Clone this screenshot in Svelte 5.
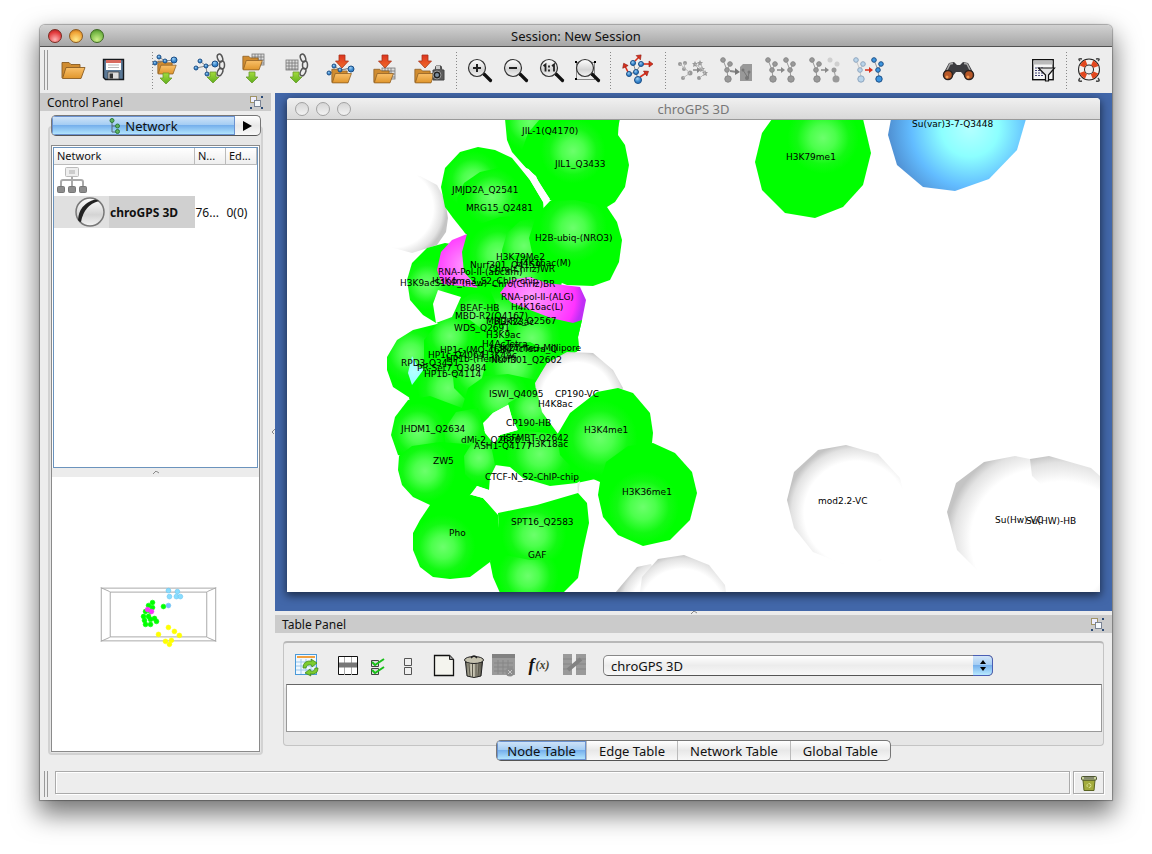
<script>
  const labels = [
    ['JIL-1(Q4170)', 522, 134], ['JIL1_Q3433', 555, 167], ['JMJD2A_Q2541', 452, 193],
    ['MRG15_Q2481', 466, 211], ['H2B-ubiq-(NRO3)', 535, 241], ['H3K79Me2', 496, 260],
    ['Nurf301_Q4159', 470, 268], ['H4K16ac(M)', 516, 266], ['Chro(Chriz)WR', 489, 272],
    ['RNA-Pol-II-(abcam)', 438, 275], ['H3K4me3_S2_ChIP-chip', 432, 284],
    ['H3K9acS10P_(new)', 400, 286], ['Chro(Chriz)BR', 492, 287], ['RNA-pol-II-(ALG)', 501, 300],
    ['H4K16ac(L)', 511, 310], ['BEAF-HB', 460, 311], ['MBD-R2(Q4167)', 455, 319],
    ['MBD-R2_Q2567', 486, 324], ['H3K23ac', 494, 325], ['WDS_Q2691', 454, 331],
    ['H3K9ac', 486, 338], ['H4AcTetra', 482, 347], ['H3K27me3-Millipore', 490, 351],
    ['HP1c-(MO-463)', 440, 353], ['H4AcTetra_Q', 500, 352], ['HP1c-Q4064', 428, 358],
    ['H3K4Ac', 482, 358], ['HP1b-(Henikoff)', 446, 362], ['Nurf301_Q2602', 491, 363],
    ['RPD3-Q3451', 401, 366], ['PR-Set7_Q3484', 417, 371], ['HP1b-Q4114', 424, 377],
    ['ISWI_Q4095', 489, 397], ['CP190-VC', 555, 397], ['H4K8ac', 538, 407],
    ['CP190-HB', 506, 426], ['JHDM1_Q2634', 401, 432], ['H3K4me1', 584, 433],
    ['dMi-2_Q2626', 461, 443], ['dSFMBT-Q2642', 500, 441], ['ASH1-Q4177', 474, 449],
    ['H3K18ac', 528, 447], ['ZW5', 433, 464], ['CTCF-N_S2-ChIP-chip', 485, 480],
    ['H3K36me1', 622, 495], ['SPT16_Q2583', 511, 525], ['Pho', 449, 536], ['GAF', 528, 558],
    ['H3K79me1', 786, 160], ['Su(var)3-7-Q3448', 912, 127], ['mod2.2-VC', 818, 504],
    ['Su(Hw)-VC', 995, 523], ['Su(HW)-HB', 1026, 524],
  ];

  // Each sphere: kind, highlight x, highlight y, gradient radius, outline points.
  const spheres = [
    ['white', 394, 208, 53, '376,237 390,247 412,253 437,245 446,232 448,218 445,200 437,185 420,176 400,173 384,175 372,190 366,212'],
    ['green', 530, 122, 34, '505,119 507,140 512,152 526,168 560,180 615,140 620,119'],
    ['green', 573, 151, 38, '540,119 528,133 522,150 525,165 536,177 550,200 575,214 607,207 615,202 625,187 629,165 625,145 618,135 619,119'],
    ['green', 473, 180, 34, '478,147 460,152 445,168 441,187 445,207 453,218 465,233 500,260 545,240 543,202 530,180 512,158 495,150'],
    ['green', 492, 197, 34, '503,167 480,172 464,183 457,198 458,216 465,233 500,260 545,240 543,202 530,182'],
    ['green', 427, 284, 30, '445,243 427,248 412,263 407,280 410,300 423,315 436,323 470,330 500,300 490,250'],
    ['magenta', 466, 266, 40, '467,234 452,240 441,252 437,270 442,284 480,288 500,270 490,240'],
    ['green', 498, 254, 36, '467,234 480,224 500,217 530,215 560,240 560,290 520,300 480,290 464,272 462,252'],
    ['green', 524, 246, 34, '545,216 520,221 507,233 502,250 504,272 520,292 560,290 570,250'],
    ['green', 520, 278, 30, '520,254 500,260 488,275 484,290 500,300 545,300 560,285 545,262'],
    ['green', 500, 322, 40, '461,297 480,286 510,285 545,300 582,320 578,337 579,350 560,362 500,380 450,360 452,317'],
    ['green', 474, 316, 28, '490,290 470,294 458,302 452,317 450,335 460,350 490,350 505,325'],
    ['green', 532, 338, 34, '552,311 528,311 510,322 503,342 512,370 545,372 579,350 578,337 582,320'],
    ['green', 411, 354, 34, '450,320 437,324 413,330 397,340 387,357 387,370 393,387 410,398 440,410 470,380 470,330'],
    ['green', 450, 336, 30, '452,315 437,324 424,340 424,362 440,380 480,372 490,335 470,320'],
    ['green', 448, 388, 36, '470,352 440,354 424,368 414,386 409,398 420,430 450,448 485,430 496,395 490,362'],
    ['blue', 414, 372, 40, '412,356 418,367 424,369 412,385 408,373'],
    ['green', 478, 372, 34, '490,346 465,350 452,366 454,388 470,404 500,400 520,380 512,352'],
    ['green', 514, 366, 34, '530,342 505,345 487,358 482,378 494,396 520,402 536,384 546,364 545,350'],
    ['green', 500, 397, 34, '508,374 485,376 468,388 462,408 470,430 485,430 484,422 493,413 508,405 538,395 536,380'],
    ['green', 418, 432, 34, '408,400 395,417 391,435 398,455 430,466 465,456 475,432 462,408 430,396'],
    ['green', 462, 428, 30, '478,408 456,412 444,430 446,450 462,464 490,450 492,440 484,430'],
    ['green', 425, 471, 36, '440,442 412,446 399,456 398,470 402,485 413,497 430,505 460,508 477,486 490,470 485,452 465,444'],
    ['green', 479, 458, 30, '490,432 474,440 464,456 465,474 477,486 489,490 490,477 496,465 500,450'],
    ['white', 577, 398, 48, '537,400 535,383 547,363 567,352 593,353 613,370 623,388 600,430 557,435 541,415'],
    ['green', 532, 408, 30, '508,403 512,418 518,432 557,440 558,434 542,412 536,388'],
    ['green', 540, 454, 40, '500,435 492,450 495,465 510,467 523,478 550,486 577,483 600,478 600,440 557,434 518,430'],
    ['white', 560, 480, 22, '577,483 580,481 578,493'],
    ['green', 600, 438, 44, '618,388 597,392 570,413 557,435 560,455 575,471 600,482 630,480 652,443 653,433 650,413 633,393'],
    ['green', 643, 507, 42, '653,443 628,446 606,462 600,482 598,495 603,517 618,535 643,546 670,540 690,520 697,493 692,472 675,453'],
    ['green', 443, 547, 38, '430,505 420,520 413,533 413,550 420,567 433,577 450,579 470,577 490,562 500,540 498,515 483,498 472,495 450,496'],
    ['green', 528, 576, 36, '490,562 493,577 500,593 563,593 578,578 583,550 540,530 494,540'],
    ['green', 534, 535, 38, '498,513 537,505 578,493 587,503 589,523 583,550 562,558 530,560 505,555 491,548 499,530'],
    ['green', 573, 228, 40, '575,200 550,201 536,216 529,238 534,262 547,277 567,285 593,286 610,280 619,262 622,240 617,222 607,207'],
    ['magenta', 531, 297, 52, '530,277 510,280 500,293 512,303 530,310 551,318 573,323 582,320 586,300 580,287 547,283'],
    ['green', 823, 138, 42, '772,119 762,133 755,162 762,190 785,213 815,218 843,207 863,185 871,153 863,119'],
    ['blue', 970, 128, 82, '891,119 888,135 897,165 923,187 955,191 989,179 1017,150 1026,119'],
    ['white', 856, 513, 70, '846,445 818,450 794,472 787,500 794,528 813,552 843,564 880,561 905,530 907,507 900,478 878,454'],
    ['white', 1062, 560, 106, '1049,456 1030,459 1018,480 1040,592 1101,592 1101,477 1091,468'],
    ['white', 1042, 540, 96, '1015,456 984,462 956,483 947,512 957,550 984,577 1019,593 1101,593 1101,540 1032,476 1030,459'],
    ['white', 672, 610, 56, '615,593 637,567 651,564 665,593'],
    ['white', 682, 612, 58, '640,593 642,577 658,559 684,555 709,565 725,585 726,593'],
  ];

  const gaps = [
    '438,290 461,297 452,317 436,323 433,304',
    '508,405 493,413 483,423 485,433 494,444 500,435 518,430 512,418',
    '472,495 477,486 489,490 498,513 483,498',
    '510,153 526,168 536,176 538,181 550,199 543,202 530,180',
  ];

  const mini = [
    ['#0f0', 153, 602], ['#0f0', 149, 605], ['#0f0', 153, 607], ['#0f0', 146, 611], ['#0f0', 151, 611],
    ['#0f0', 144, 616], ['#0f0', 149, 616], ['#0f0', 145, 620], ['#0f0', 151, 619], ['#0f0', 155, 618],
    ['#0f0', 157, 621], ['#0f0', 146, 624], ['#0f0', 151, 624], ['#0f0', 164, 606],
    ['#f3f', 148, 609], ['#f3f', 152, 611],
    ['#8df', 169, 590], ['#8df', 170, 596], ['#8df', 178, 591], ['#8df', 177, 596], ['#8df', 181, 596], ['#7bf', 169, 605],
    ['#ff0', 169, 627], ['#ff0', 175, 631], ['#ff0', 159, 634], ['#ff0', 180, 635], ['#ff0', 172, 640], ['#ff0', 166, 641], ['#ff0', 170, 644],
  ];

  const tabs = ['Node Table', 'Edge Table', 'Network Table', 'Global Table'];
  let active = $state('Node Table');
</script>

{#snippet folder(x, y, s = 1)}
  <g transform="translate({x} {y}) scale({s})">
    <path d="M1 17V1.500h7l2 2h9v4" fill="#d08c30" stroke="#8a5c22" stroke-width=".9" />
    <path d="M1.500 17.500 5 6.500h19L20 17.500z" fill="url(#gold)" stroke="#8a5c22" stroke-width=".9" stroke-linejoin="round" />
  </g>
{/snippet}
{#snippet ball(x, y, r = 2)}
  <circle cx={x} cy={y} {r} fill="url(#ball)" stroke="#1d4f86" />
{/snippet}
{#snippet down(x, y)}
  <path d="M{x - 3} {y}h6v5h3l-6 6-6-6h3z" fill="url(#leaf)" stroke="#6a9a2c" stroke-width=".8" />
{/snippet}
{#snippet red(x, y)}
  <path d="M{x - 3} {y}h6v6h3.500l-6.500 7-6.500-7h3.500z" fill="url(#flame)" stroke="#a8321a" stroke-width=".8" />
{/snippet}
{#snippet grid(x, y, w, h)}
  <g stroke="#777" stroke-width=".8">
    <rect {x} {y} width={w} height={h} fill="#ddd" />
    <path d="M{x + 3} {y}v{h}M{x + 6} {y}v{h}M{x + 9} {y}v{h}M{x} {y + 3}h{w}M{x} {y + 6}h{w}M{x} {y + 9}h{w}" />
  </g>
{/snippet}
{#snippet chain(x)}
  <g fill="none" stroke="#555" stroke-width="1.500">
    <ellipse cx={x} cy="8" rx="2.500" ry="4" transform="rotate(-20 {x} 8)" />
    <ellipse cx={x + 2} cy="15" rx="2.500" ry="4" />
    <ellipse cx={x} cy="22" rx="2.500" ry="4" transform="rotate(25 {x} 22)" />
  </g>
{/snippet}
{#snippet lens()}
  <path d="m25 24 6.500 6.500" stroke="#111" stroke-width="3.200" stroke-linecap="round" />
  <circle cx="18" cy="18" r="8.500" fill="url(#glass)" stroke="#333" stroke-width="1.200" />
{/snippet}
{#snippet tree(x, c, o = 1)}
  <g opacity={o} fill={c} stroke={c === '#999' ? '#888' : '#1d4f86'}>
    <path d="m{x} 10 4 10 1 9M{x + 4} 20l3-6" fill="none" stroke="#999" />
    <circle cx={x} cy="10" r="2.300" /><circle cx={x + 7} cy="14" r="2.300" />
    <circle cx={x + 4} cy="20" r="2.300" /><circle cx={x + 5} cy="29" r="3.200" />
  </g>
{/snippet}
{#snippet right(x, c)}
  <path d="M{x} 20h5" stroke={c} stroke-width="1.500" /><path d="m{x + 4} 17 4 3-4 3z" fill={c} />
{/snippet}
{#snippet redArrow(x1, y1, x2, y2)}
  <path d="M{x1} {y1}L{x2} {y2}" stroke="#d9301c" stroke-width="1.600" />
  <path d="M{x2 + 3} {y2}l-4-3v6z" fill="#d9301c" stroke="#8f1a10" stroke-width=".6" transform="rotate({(Math.atan2(y2 - y1, x2 - x1) * 180) / Math.PI} {x2} {y2})" />
{/snippet}
{#snippet floatIcon()}
  <button class="float" aria-label="Float panel">
    <svg width="14" height="14" viewBox="0 0 14 14">
      <rect x=".5" y=".5" width="6" height="6" fill="#eef" stroke="#a09468" />
      <rect x="4.500" y="4.500" width="6" height="6" fill="#f4f8fc" stroke="#7b8494" />
      <path d="M11 0h2v2h-2zM11 11h2v2h-2zM0 11h2v2H0z" fill="#2b4a75" />
    </svg>
  </button>
{/snippet}

<svg class="defs" width="0" height="0" aria-hidden="true">
  <defs>
    <linearGradient id="gold" x2="0" y2="1"><stop stop-color="#f9c06a" /><stop offset="1" stop-color="#e0962c" /></linearGradient>
    <linearGradient id="leaf" x2="0" y2="1"><stop stop-color="#a4dc3c" /><stop offset="1" stop-color="#5fae1e" /></linearGradient>
    <linearGradient id="flame" x2="0" y2="1"><stop stop-color="#dd3420" /><stop offset="1" stop-color="#f06a28" /></linearGradient>
    <radialGradient id="ball" cx=".4" cy=".3"><stop stop-color="#9cd0f6" /><stop offset="1" stop-color="#2f7fc8" /></radialGradient>
    <linearGradient id="glass" x2="0" y2="1"><stop stop-color="#fff" /><stop offset=".6" stop-color="#d4d4d4" /><stop offset="1" stop-color="#f4f4f4" /></linearGradient>
    <linearGradient id="silver" x2="1"><stop stop-color="#6a685a" /><stop offset=".4" stop-color="#d8d5c2" /><stop offset="1" stop-color="#4c4a40" /></linearGradient>
  </defs>
</svg>

<div class="page">
  <div class="window">
    <header class="title">
      <span class="lights"><button class="r" aria-label="Close"></button><button class="y" aria-label="Minimize"></button><button class="g" aria-label="Zoom"></button></span>
      <span class="caption">Session: New Session</span>
    </header>

    <div class="toolbar">
      <span class="grip"></span>
      <div class="group first">
        <button aria-label="Open session"><svg viewBox="0 0 40 40">{@render folder(8, 11)}</svg></button>
        <button aria-label="Save session"><svg viewBox="0 0 40 40">
          <path d="M9.500 9.500h20v20h-18l-2-2z" fill="#5a7896" stroke="#15191d" stroke-width="1.400" />
          <path d="M12 10h15v10H12z" fill="#fff" /><path d="M12 10h15v3H12z" fill="#d86a5e" /><path d="M14 15h11M14 17.500h11" stroke="#bbb" />
          <path d="M14 22h11v7H14z" fill="#ddd" stroke="#444" stroke-width=".8" /><path d="M15.500 23.500h3.500v5h-3.500z" fill="#333" />
        </svg></button>
      </div>
      <span class="sep"></span>
      <div class="group imports">
        <button aria-label="Import network from file"><svg viewBox="0 0 40 40">
          {@render folder(12, 10, 0.800)}
          <path d="m10 13 10-2 9-1M14 7l6 4" stroke="#888" />
          {@render ball(10, 13)}{@render ball(14, 7)}{@render ball(20, 11)}{@render ball(29, 10, 3)}{@render down(21, 23)}
        </svg></button>
        <button aria-label="Import network from web"><svg viewBox="0 0 40 40">
          <path d="m7 18 10-2 9-2M11 11l6 5 1 8" fill="none" stroke="#888" />
          {@render ball(7, 18)}{@render ball(11, 11)}{@render ball(17, 16)}{@render ball(18, 24)}{@render ball(26, 14, 3)}
          {@render chain(31)}{@render down(24, 22)}
        </svg></button>
        <button aria-label="Import table from file"><svg viewBox="0 0 40 40">{@render grid(19, 4, 12, 11)}{@render folder(9, 5, 0.850)}{@render down(19, 22)}</svg></button>
        <button aria-label="Import table from web"><svg viewBox="0 0 40 40">{@render grid(9, 10, 12, 10)}{@render chain(26)}{@render down(19, 22)}</svg></button>
        <button aria-label="Export network"><svg viewBox="0 0 40 40">
          <path d="m8 23 11-3 11-2M13 16l6 4" stroke="#888" />{@render folder(10, 18, 0.850)}
          {@render ball(8, 23)}{@render ball(13, 16)}{@render ball(30, 19, 3)}{@render red(21, 5)}{@render ball(19, 20)}
        </svg></button>
        <button aria-label="Export table"><svg viewBox="0 0 40 40">{@render grid(17, 18, 13, 11)}{@render folder(8, 18, 0.850)}{@render red(20, 5)}</svg></button>
        <button aria-label="Export image"><svg viewBox="0 0 40 40">
          {@render folder(5, 18, 0.850)}{@render red(16, 5)}
          <path d="M24 20h2l1-4h5l1 4h2v10H24z" fill="#5a5a5a" stroke="#444" /><path d="M27 16h4v3h-4z" fill="#ccc" /><circle cx="28" cy="25" r="4" fill="#222" stroke="#999" /><circle cx="28" cy="25" r="2" fill="#7d8fa0" />
        </svg></button>
      </div>
      <span class="sep"></span>
      <div class="group zooms">
        <button aria-label="Zoom in"><svg viewBox="0 0 40 40">{@render lens()}<path d="M14 18h8M18 14v8" stroke="#222" stroke-width="2" /></svg></button>
        <button aria-label="Zoom out"><svg viewBox="0 0 40 40">{@render lens()}<path d="M14 18h8" stroke="#222" stroke-width="2" /></svg></button>
        <button aria-label="Zoom to 100%"><svg viewBox="0 0 40 40">{@render lens()}<path d="M12.500 16l2-1.500v7M21 16l2-1.500v7M18 15.500v2M18 19.500v2" fill="none" stroke="#222" stroke-width="1.800" /></svg></button>
        <button aria-label="Fit selected"><svg viewBox="0 0 40 40"><rect x="9.500" y="12.500" width="18" height="17" fill="none" stroke="#222" stroke-dasharray="1 1" />{@render lens()}<path d="M8 11h2v2H8zM27 11h2v2h-2zM8 28h2v2H8z" /></svg></button>
      </div>
      <span class="sep"></span>
      <div class="group layout">
        <button aria-label="Apply layout"><svg viewBox="0 0 40 40">
          <path d="m15 13 3 9 2 8M23 14l-5 8-7 2" fill="none" stroke="#888" />
          {@render redArrow(17, 11, 21, 7)}{@render redArrow(25, 14, 32, 14)}{@render redArrow(10, 22, 7, 16)}{@render redArrow(22, 27, 28, 23)}
          {@render ball(15, 13, 2.500)}{@render ball(23, 14, 2.500)}{@render ball(11, 24, 2.500)}{@render ball(18, 22, 2.500)}{@render ball(20, 30, 3.500)}
        </svg></button>
      </div>
      <span class="sep"></span>
      <div class="group nets">
        <button aria-label="New network from selection"><svg viewBox="0 0 40 40">
          <g fill="#999"><circle cx="7" cy="14" r="2" /><circle cx="12" cy="13" r="2" /><circle cx="11" cy="19" r="2" /><circle cx="17" cy="23" r="2.500" /><circle cx="10" cy="28" r="2" /><circle cx="26" cy="28" r="2" />
            {#each [[22, 14], [27, 13], [29, 19], [32, 23]] as [x, y]}<path d="m{x} {y - 3} 1 2h2l-1.500 1.500.500 2.500-2-1-2 1 .5-2.500-1.500-1.500h2z" />{/each}
          </g>
          <path d="m7 14 10 9-7 5M12 13l-1 6M22 14l7 5-1-6M27 28l5-5-3-4" fill="none" stroke="#bbb" />{@render right(20, '#888')}
        </svg></button>
        <button aria-label="New network file"><svg viewBox="0 0 40 40">{@render tree(6, '#999')}<path d="m23 17 3-3h9v17H23z" fill="#999" /><path d="M13 21l7 1" stroke="#888" stroke-width="2" /><path d="m18 18 5 4-5 3z" fill="#777" /><path d="m26 20 5 8 1-6" fill="none" stroke="#777" /><g fill="#777"><circle cx="26" cy="20" r="1.500" /><circle cx="32" cy="22" r="1.500" /><circle cx="30" cy="28" r="2" /></g></svg></button>
        <button aria-label="Clone network"><svg viewBox="0 0 40 40">{@render tree(7, '#999')}{@render tree(25, '#999')}{@render right(16, '#888')}</svg></button>
        <button aria-label="Hide selected"><svg viewBox="0 0 40 40">{@render tree(7, '#999')}<g fill="#999"><circle cx="25" cy="10" r="2.500" opacity=".35" /><circle cx="32" cy="14" r="2.500" opacity=".35" /><path d="m29 20 2 9" stroke="#999" /><circle cx="29" cy="20" r="2.500" /><circle cx="31" cy="29" r="3.500" /></g>{@render right(16, '#888')}</svg></button>
        <button aria-label="Show all"><svg viewBox="0 0 40 40">{@render tree(7, '#7cb8e8', 0.450)}{@render tree(25, '#3d96e0')}{@render right(16, '#d9301c')}</svg></button>
      </div>
      <span class="flex"></span>
      <div class="group search">
        <button aria-label="Search"><svg viewBox="0 0 40 40">
          <path d="m5 24 6-11 5-1 3 3h3l3-3 5 1 6 11-8 4-5-6h-5l-5 6z" fill="#3c3c40" /><path d="m9 20 3-6 3-.5M32 20l-3-6-3-.5" fill="none" stroke="#aaa" stroke-width="1.500" />
          <g fill="#b85828" stroke="#2b2320" stroke-width="1.500"><circle cx="10" cy="25" r="4.500" /><circle cx="31" cy="25" r="4.500" /></g><g fill="#f29a55"><circle cx="9" cy="27" r="1.500" /><circle cx="30" cy="27" r="1.500" /></g>
        </svg></button>
      </div>
      <div class="group tail">
        <button aria-label="Show filter"><svg viewBox="0 0 40 40">
          <rect x="8.700" y="9.700" width="20.500" height="20" fill="#f6f6f6" stroke="#111" stroke-width="1.400" /><path d="M9.500 10.500h19v4h-19z" fill="#bbb" /><path d="M11 18h9M11 20.500h9M11 23h9M11 25.500h9" stroke="#447" stroke-dasharray="2 1" />
          <path d="M14.500 18h16l-6 7v6h-3v-6z" fill="#e4e4e4" stroke="#111" stroke-width="1.200" />
        </svg></button>
        <span class="sep"></span>
        <button aria-label="Help"><svg viewBox="0 0 40 40">
          <path d="M11 11q-3-3 2-2M29 11q3-3-2-2M11 28q-3 4 2 3M29 28q3 4-2 3" fill="none" stroke="#444" stroke-width="1.500" />
          <circle cx="20" cy="19.500" r="7.500" fill="none" stroke="#222" stroke-width="7" /><circle cx="20" cy="19.500" r="7.500" fill="none" stroke="#f5f0ec" stroke-width="5" />
          <circle cx="20" cy="19.500" r="7.500" fill="none" stroke="#e2481e" stroke-width="5" stroke-dasharray="5.900 5.880" stroke-dashoffset="-3" />
        </svg></button>
      </div>
    </div>

    <main>
      <aside>
        <div class="phead"><span>Control Panel</span>{@render floatIcon()}</div>
        <div class="ctabs">
          <button class="on"><svg width="12" height="16" viewBox="0 0 12 16"><path d="M3 2v12h5M3 8h5" fill="none" stroke="#567" /><g fill="#5fb45f" stroke="#2c7a3c"><circle cx="3" cy="2.500" r="2" /><circle cx="8.500" cy="8" r="2" /><circle cx="8.500" cy="13.500" r="2" /></g></svg>Network</button>
          <button class="more" aria-label="More tabs"><svg width="10" height="10" viewBox="0 0 10 10"><path d="M0 0l9 5-9 5z" /></svg></button>
        </div>
        <div class="cbox">
          <div class="inner">
            <div class="tree">
              <table>
                <colgroup><col /><col class="n" /><col class="n" /></colgroup>
                <thead><tr><th>Network</th><th>N...</th><th>Ed...</th></tr></thead>
                <tbody>
                  <tr><td colspan="3"><svg width="34" height="30" viewBox="0 0 34 30">
                    <rect x="10.500" y="2.500" width="13" height="9" rx="1" fill="#eee" stroke="#bbb" /><path d="M14 6h6M14 8h6" stroke="#aaa" /><path d="M17 12v9M6 21v-4q0-2 2-2h18q2 0 2 2v4" fill="none" stroke="#aaa" stroke-width="2" />
                    <g fill="#8c8c8c" stroke="#777"><rect x="2.500" y="21.500" width="7" height="6" rx="1" /><rect x="13.500" y="21.500" width="7" height="6" rx="1" /><rect x="24.500" y="21.500" width="7" height="6" rx="1" /></g>
                  </svg></td></tr>
                  <tr><td class="sel"><div><svg width="32" height="32" viewBox="0 0 32 32"><circle cx="16" cy="16" r="14" fill="url(#glass)" stroke="#777" stroke-width="1.500" /><path d="M4 24Q5 8 21 3.500q3 .5 4 1.500Q10 9 7 26q-2 0-3-2z" fill="#222" /></svg><b>chroGPS 3D</b></div></td><td>76...</td><td>0(0)</td></tr>
                </tbody>
              </table>
            </div>
            <div class="split"><svg width="6" height="4" viewBox="0 0 6 4"><path d="M0 3 3 0l3 2" fill="none" stroke="#888" /></svg></div>
            <div class="bird">
              <svg viewBox="52 477 208 273" preserveAspectRatio="xMidYMid meet">
                <g fill="none" stroke="#aaa"><rect x="101.500" y="587.500" width="115" height="53" /><rect x="110.500" y="591.500" width="97" height="45" /><path d="m101 587 9 4M217 587l-9 4M101 641l9-4M217 641l-9-4" /></g>
                {#each mini as [c, x, y]}<circle cx={x} cy={y} r="2.400" fill={c} stroke={c === '#8df' || c === '#7bf' ? '#6bc4ee' : c} stroke-width=".6" />{/each}
              </svg>
            </div>
          </div>
        </div>
      </aside>
      <div class="vsplit"><svg width="4" height="6" viewBox="0 0 4 6"><path d="M4 0 1 3l2 2" fill="none" stroke="#888" /></svg></div>

      <section>
        <div class="desktop">
          <div class="frame">
            <div class="ftitle">
              <span class="lights off"><button aria-label="Close view"></button><button aria-label="Minimize view"></button><button aria-label="Zoom view"></button></span>
              <span class="caption">chroGPS 3D</span>
            </div>
            <svg class="canvas" viewBox="287 120 813 472" preserveAspectRatio="xMinYMin slice">
              <defs>
                {#each spheres as [kind, x, y, r], i}
                  <radialGradient id="s{i}" gradientUnits="userSpaceOnUse" cx={x} cy={y} {r}>
                    {#if kind === 'green'}
                      <stop stop-color="#6cff6c" /><stop offset=".3" stop-color="#4cff4c" /><stop offset=".62" stop-color="#12fa12" /><stop offset=".85" stop-color="#00ff00" />
                    {:else if kind === 'magenta'}
                      <stop stop-color="#ff9cff" /><stop offset=".5" stop-color="#ff5cff" /><stop offset=".85" stop-color="#ff33ff" /><stop offset="1" stop-color="#c02ef5" />
                    {:else if kind === 'blue'}
                      <stop stop-color="#b4ffff" /><stop offset=".35" stop-color="#8cffff" /><stop offset=".72" stop-color="#62bcff" /><stop offset="1" stop-color="#5090d2" />
                    {:else}
                      <stop stop-color="#fff" /><stop offset=".74" stop-color="#fff" /><stop offset=".92" stop-color="#e2e2e2" /><stop offset="1" stop-color="#c4c4c4" />
                    {/if}
                  </radialGradient>
                {/each}
              </defs>
              {#each spheres as [kind, , , , pts], i}<polygon points={pts} fill="url(#s{i})" />{/each}
              {#each gaps as g}<polygon points={g} fill="#fff" />{/each}
              {#each labels as [t, x, y]}<text {x} {y}>{t}</text>{/each}
            </svg>
          </div>
        </div>
        <div class="hsplit"><svg width="6" height="4" viewBox="0 0 6 4"><path d="M0 3 3 0l3 2" fill="none" stroke="#888" /></svg></div>
        <div class="phead"><span>Table Panel</span>{@render floatIcon()}</div>
        <div class="tbox">
          <div class="ttools">
            <button class="refresh" aria-label="Refresh table"><svg viewBox="0 0 24 24">
              <rect x=".5" y=".5" width="21" height="20" fill="#f0f8ff" stroke="#4a9ad8" /><path d="M2 3h18" stroke="#f0a040" stroke-width="2" /><path d="M1 8h20M1 12h20M1 16h20M6 5v15M11 5v15M16 5v15" stroke="#9cc8ec" />
              <path d="M8 14q0-8 9-7l-1-2 6 4-5 4-.5-2q-5-1-5.500 3zM23 14q0 7-8 6l1 2-6-3 5-4 .5 2q4 1 4.500-3z" fill="#7ccc30" stroke="#3f8a18" stroke-width=".8" />
            </svg></button>
            <button aria-label="Show columns"><svg viewBox="0 0 24 24"><path d="M2.500 2.500h19v18h-19z" fill="#fff" stroke="#111" /><path d="M8.500 3v18M15.500 3v18" stroke="#aaa" /><path d="M3 8.500h18v5H3z" fill="#777" /></svg></button>
            <button aria-label="Select all columns"><svg viewBox="0 0 24 24"><path d="M5.500 6.500h7v6h-7zM5.500 14.500h7v6h-7z" fill="#ddd" stroke="#444" /><path d="m6 8 3 3 9-6M6 16l3 3 9-6" fill="none" stroke="#18c018" stroke-width="2" /></svg></button>
            <button class="wide" aria-label="Deselect all columns"><svg viewBox="0 0 24 24"><path d="M8.500 4.500h7v7h-7zM8.500 13.500h7v7h-7z" fill="#f0f0f0" stroke="#555" /></svg></button>
            <button aria-label="Create column"><svg viewBox="0 0 24 24"><path d="M2.500 1.500h15l4 4v16h-19z" fill="#f4f4ee" stroke="#111" stroke-width="1.300" /><path d="M17.500 1.500v4h4" fill="#999" stroke="#222" /></svg></button>
            <button aria-label="Delete column"><svg viewBox="0 0 24 24"><path d="M3.500 8h17l-1.500 14q-7 3-14 0z" fill="url(#silver)" stroke="#222" /><path d="M7 10l1 12M10.500 10v13M14 10v13M17 10l-1 12" stroke="#5a574a" /><ellipse cx="12" cy="6" rx="9.500" ry="3.500" fill="#c4c1ae" stroke="#222" /><path d="M9 4q3-4 6 0" fill="none" stroke="#222" stroke-width="1.500" /></svg></button>
            <button aria-label="Delete table"><svg viewBox="0 0 24 24"><path d="M0 0h23v21H0z" fill="#9a9a9a" /><path d="M0 0h23v4H0z" fill="#818181" /><path d="M2 9h19M2 13h19M2 17h19M6 6v14M11 6v14M16 6v14" stroke="#868686" /><circle cx="18" cy="18" r="4.500" fill="#8c8c8c" /><path d="m16 16 4 4M20 16l-4 4" stroke="#c4c4c4" /></svg></button>
            <button class="fx" aria-label="Function builder"><i>f</i><small>(x)</small></button>
            <button class="map" aria-label="Map table"><svg viewBox="0 0 24 24"><path d="M1 0h9v21H1zM14 0h10v21H14z" fill="#9a9a9a" /><path d="M1 5h9M1 10h9M1 15h9M14 5h10M14 10h10M14 15h10" stroke="#868686" /><path d="m6 16 13-11" stroke="#828282" stroke-width="4" /></svg></button>
            <div class="pick"><select aria-label="Table"><option>chroGPS 3D</option></select><span class="step"><svg width="6" height="11" viewBox="0 0 6 11"><path d="M3 0l3 4H0zM3 11l3-4H0z" /></svg></span></div>
          </div>
          <div class="data"></div>
        </div>
        <div class="tabs">{#each tabs as t}<button class:on={t === active} onclick={() => (active = t)}>{t}</button>{/each}</div>
      </section>
    </main>

    <footer>
      <span class="grip"></span>
      <div class="status"></div>
      <button class="mem" aria-label="Memory"><svg width="16" height="16" viewBox="0 0 16 16"><path d="M2 5h12l-1 10.500H3z" fill="#a3ab3c" stroke="#5a6422" /><rect x=".5" y="1.500" width="15" height="3.500" rx="1" fill="#c9d39c" stroke="#4d5530" /><path d="M3 3h10" stroke="#444" /><circle cx="8" cy="10.500" r="2" fill="none" stroke="#dfe69a" stroke-dasharray="3 1" /></svg></button>
    </footer>
  </div>
</div>

<style>
  :global(body) { margin: 0; background: #fff; }
  * { box-sizing: border-box; }
  button { border: 0; padding: 0; margin: 0; background: none; font: inherit; color: inherit; display: flex; align-items: center; justify-content: center; }
  svg { display: block; flex: none; }
  .defs { position: absolute; }
  .page { min-height: 100vh; padding: 25px 40px 55px; display: flex; font: 13px "Noto Sans", sans-serif; color: #111; }
  .window { flex: 1; min-width: 0; display: flex; flex-direction: column; background: #ededed; border-radius: 5px 5px 0 0; box-shadow: 0 0 1px 1px rgba(0,0,0,.3), 0 12px 26px 2px rgba(0,0,0,.55); }
  .title { height: 22px; display: grid; grid-template-columns: 1fr auto 1fr; align-items: center; background: linear-gradient(#d2d2d2, #a6a6a6); border-bottom: 1px solid #515151; border-radius: 5px 5px 0 0; }
  .caption { line-height: 20px; }
  .lights { display: flex; gap: 7px; padding-left: 8px; }
  .lights button { width: 14px; height: 14px; border-radius: 50%; border: 1px solid #7a2a20; }
  .lights .r { background: radial-gradient(circle at 50% 80%, #ffb4b4, #e23a3c 65%, #a01c20); }
  .lights .y { background: radial-gradient(circle at 50% 80%, #ffe98a, #f0a336 65%, #b06414); border-color: #8c5a1e; }
  .lights .g { background: radial-gradient(circle at 50% 80%, #cdf08a, #76b846 65%, #3f7c20); border-color: #3e6a22; }
  .lights.off button { background: linear-gradient(#d6d6d6, #f2f2f2); border-color: #a2a2a2; }
  .toolbar { height: 46px; display: flex; align-items: center; }
  .grip { width: 4px; height: 40px; margin-left: 4px; border: solid #999; border-width: 0 1px; flex: none; }
  .sep { width: 1px; height: 37px; flex: none; background: repeating-linear-gradient(#888 0 1px, transparent 1px 3px); }
  .group { display: flex; align-items: center; }
  .group button { width: 44px; height: 42px; }
  .group svg { width: 40px; height: 40px; }
  .first { padding: 0 18px 0 4px; }
  .first button { width: 41px; }
  .imports { margin-left: -10px; padding-right: 5px; }
  .zooms { padding: 0 5px 0 4px; }
  .zooms button { width: 36px; }
  .layout { padding: 0 5px; }
  .layout button { width: 44px; }
  .nets { padding-left: 5px; }
  .flex { flex: 1; }
  .search { margin-right: 42px; }
  .tail { padding-right: 1px; }
  main { flex: 1; display: flex; min-height: 0; }
  aside { width: 231px; flex: none; display: flex; flex-direction: column; }
  .vsplit { width: 4px; display: flex; align-items: center; }
  .phead { height: 18px; padding: 1px 7px 0; display: flex; align-items: center; justify-content: space-between; background: #cbcbcb; font-size: 12px; line-height: 17px; flex: none; }
  .ctabs, .tabs { display: flex; border: 1px solid #777; border-bottom-color: #555; border-radius: 5px; overflow: hidden; background: linear-gradient(#fff, #e8e8e8 50%, #f8f8f8); position: relative; z-index: 1; }
  .ctabs { height: 21px; margin: 4px 10px 0 11px; }
  .ctabs .on { flex: 1; gap: 4px; }
  .ctabs .more { width: 25px; }
  .on { background: linear-gradient(#d3e5f8, #a2ccf3 48%, #76b0ec 50%, #b8eaff); box-shadow: inset 0 0 0 1px #6a92d0; }
  .cbox { flex: 1; display: flex; margin: -10px 8px 15px 8px; padding: 17px 1px 1px; border: 2px solid #d2d2d2; border-radius: 4px; background: #e6e6e6; }
  .inner { flex: 1; min-width: 0; display: flex; flex-direction: column; border: 1px solid #8a8a8a; background: #fff; }
  .tree { flex: 0 0 321px; border: 1px solid #6b93bd; margin: 1px 1px 0; }
  table { width: 100%; border-collapse: collapse; table-layout: fixed; font-size: 12px; }
  .n { width: 31px; }
  th { height: 16px; padding: 0 0 0 3px; text-align: left; font-size: 11px; font-weight: 400; line-height: 15px; background: linear-gradient(#fff, #eee); border-bottom: 1px solid #bbb; border-right: 1px solid #bbb; }
  td { height: 32px; padding: 0 0 0 1px; white-space: nowrap; }
  .sel { background: linear-gradient(90deg, #e0e0e0 55px, #d0d0d0 55px); padding-left: 20px; }
  .sel div { display: flex; align-items: center; gap: 4px; }
  .split, .hsplit { height: 9px; display: flex; justify-content: center; align-items: center; background: #ececec; flex: none; }
  .hsplit { height: 4px; }
  .bird { flex: 1; min-height: 0; display: flex; }
  .bird svg { width: 100%; height: 100%; min-height: 270px; }
  section { flex: 1; min-width: 0; display: flex; flex-direction: column; }
  .desktop { flex: 1; background: #4267a9; padding: 5px 12px 19px; display: flex; }
  .frame { flex: 1; display: flex; flex-direction: column; background: #fff; box-shadow: 0 3px 8px 1px rgba(0,0,0,.55); border-radius: 4px 4px 0 0; }
  .ftitle { height: 22px; display: grid; grid-template-columns: 1fr auto 1fr; align-items: center; background: linear-gradient(#f0f0f0, #d8d8d8); border-bottom: 1px solid #999; border-radius: 4px 4px 0 0; color: #777; }
  .canvas { width: 100%; flex: 1; min-height: 0; }
  .canvas text { font: 9px "DejaVu Sans", sans-serif; fill: #000; }
  .tbox { margin: 8px 8px 0; padding: 4px 1px 13px 2px; border: 1px solid #c4c4c4; border-top: 2px solid #b8b8b8; border-radius: 4px; background: #e6e6e6; box-shadow: inset 0 44px 0 #ededed; }
  .ttools { height: 37px; display: flex; align-items: center; padding-left: 9px; }
  .ttools button { width: 30px; height: 28px; }
  .ttools svg { width: 24px; height: 24px; }
  .ttools .refresh { width: 24px; margin-right: 14px; }
  .ttools .wide { margin-right: 6px; }
  .ttools .fx { width: 40px; font-family: "Liberation Serif", serif; font-weight: 700; font-style: italic; gap: 1px; }
  .fx i { font-size: 18px; }
  .fx small { font-size: 12px; color: #443; }
  .pick { position: relative; margin-left: 14px; width: 390px; height: 21px; }
  .pick select { appearance: none; display: block; width: 100%; height: 21px; padding: 0 24px 0 7px; font: inherit; color: inherit; border: 1px solid #888; border-bottom-color: #555; border-radius: 5px; background: linear-gradient(#fff, #ececec 50%, #f8f8f8); }
  .step { position: absolute; right: 0; top: 0; width: 20px; height: 21px; display: flex; justify-content: center; align-items: center; border: 1px solid #4a5eb4; border-left: 0; border-radius: 0 5px 5px 0; background: linear-gradient(#d3e5f8, #a2ccf3 48%, #76b0ec 50%, #b8eaff); pointer-events: none; }
  .ttools .step svg { width: 6px; height: 11px; }
  .data { height: 48px; background: #fff; border: 1px solid #999; border-top-color: #666; }
  .tabs { height: 21px; align-self: center; margin: -6px 0 9px; }
  .tabs button { padding: 0 12px; border-left: 1px solid #bbb; }
  .tabs button:first-child { border-left: 0; padding: 0 10px; }
  footer { height: 30px; display: flex; padding: 1px 8px 6px 0; gap: 3px; }
  footer .grip { height: 26px; margin-right: 4px; }
  .status { flex: 1; border: 1px solid #aaa; box-shadow: inset 1px 1px #fff, 1px 1px #fff; }
  .mem { width: 31px; border: 1px solid #aaa; box-shadow: inset 1px 1px #fff, 1px 1px #fff; }
</style>
